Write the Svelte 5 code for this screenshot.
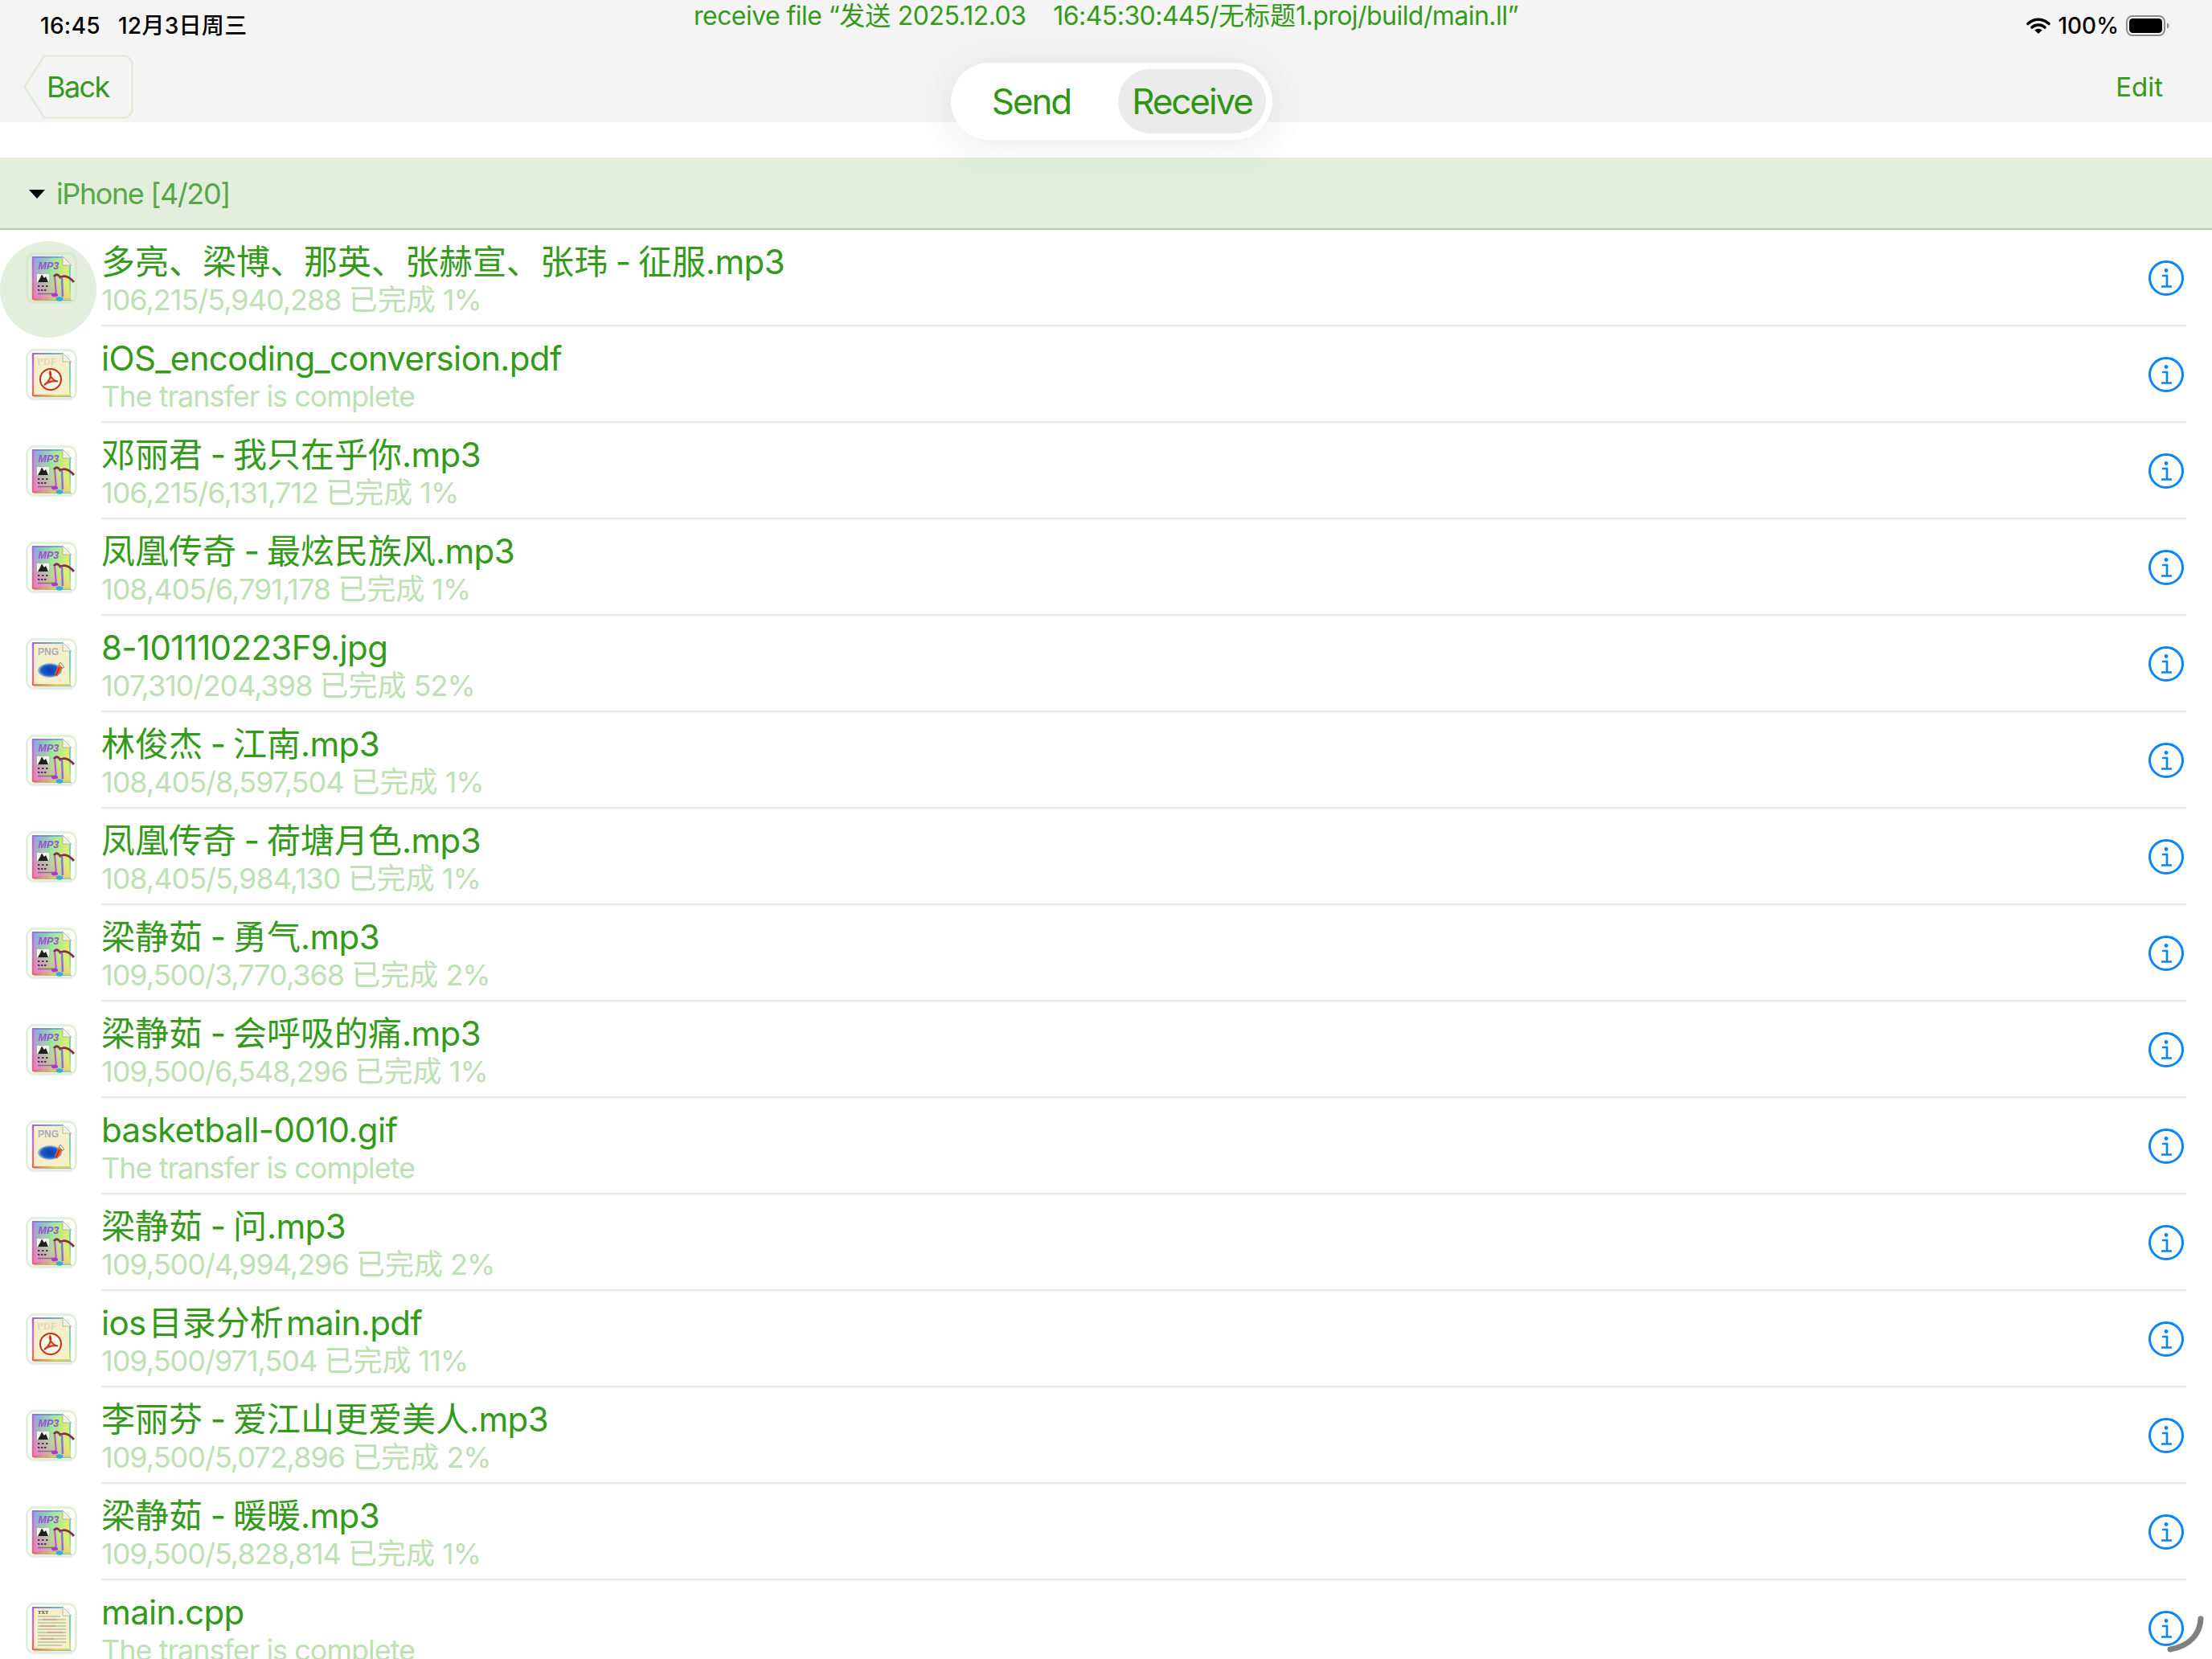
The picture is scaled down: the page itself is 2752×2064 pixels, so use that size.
<script>
  const files = [
    { name: '多亮、梁博、那英、张赫宣、张玮 - 征服.mp3', status: '106,215/5,940,288 已完成 1%', type: 'mp3', active: true },
    { name: 'iOS_encoding_conversion.pdf', status: 'The transfer is complete', type: 'pdf' },
    { name: '邓丽君 - 我只在乎你.mp3', status: '106,215/6,131,712 已完成 1%', type: 'mp3' },
    { name: '凤凰传奇 - 最炫民族风.mp3', status: '108,405/6,791,178 已完成 1%', type: 'mp3' },
    { name: '8-101110223F9.jpg', status: '107,310/204,398 已完成 52%', type: 'png' },
    { name: '林俊杰 - 江南.mp3', status: '108,405/8,597,504 已完成 1%', type: 'mp3' },
    { name: '凤凰传奇 - 荷塘月色.mp3', status: '108,405/5,984,130 已完成 1%', type: 'mp3' },
    { name: '梁静茹 - 勇气.mp3', status: '109,500/3,770,368 已完成 2%', type: 'mp3' },
    { name: '梁静茹 - 会呼吸的痛.mp3', status: '109,500/6,548,296 已完成 1%', type: 'mp3' },
    { name: 'basketball-0010.gif', status: 'The transfer is complete', type: 'png' },
    { name: '梁静茹 - 问.mp3', status: '109,500/4,994,296 已完成 2%', type: 'mp3' },
    { name: 'ios 目录分析 main.pdf', status: '109,500/971,504 已完成 11%', type: 'pdf', tight: true },
    { name: '李丽芬 - 爱江山更爱美人.mp3', status: '109,500/5,072,896 已完成 2%', type: 'mp3' },
    { name: '梁静茹 - 暖暖.mp3', status: '109,500/5,828,814 已完成 1%', type: 'mp3' },
    { name: 'main.cpp', status: 'The transfer is complete', type: 'txt' }
  ]

  // odd entries are the CJK runs, which keep their natural spacing
  const runs = (s) => s.split(/([\u3000-\u9fff]+)/)
</script>

{#snippet mixed(text)}
  {#each runs(text) as part, i}<span class:cjk={i % 2 === 1}>{part}</span>{/each}
{/snippet}

{#snippet page(fill)}
  <path d="M8 5H45L55 15V57H8Z" fill={fill} />
  <path d="M8 5H45" stroke="url(#edgeTop)" stroke-width="2" fill="none" />
  <path d="M8 4V58" stroke="url(#edgeLeft)" stroke-width="2.4" fill="none" />
  <path d="M54 15V57" stroke="url(#edgeRight)" stroke-width="2" fill="none" />
  <path d="M8 57H55" stroke="url(#edgeBottom)" stroke-width="2" fill="none" />
  <path d="M9 58.6H56" stroke="#77776c" stroke-width="1.2" opacity="0.55" fill="none" />
  <path d="M45 4L56 15H45Z" fill="#f6f4e4" stroke="#aaa792" stroke-width="0.8" />
{/snippet}

{#snippet fileIcon(type)}
  <svg class="doc" viewBox="0 0 62 62" width="62" height="62">
    {#if type === 'mp3'}
      {@render page('url(#mp3Base)')}
      <path d="M9 6H45L53 15V56H9Z" fill="url(#mp3Pink)" />
      <text x="14.5" y="20" class="lbl-mp3">MP3</text>
      <rect x="13" y="26" width="15" height="10" fill="#f4f4f0" />
      <path d="M14 36L17 31L19 26.5L22 31L24 29L27 36Z" fill="#1c201a" />
      <path d="M14 41h2.5M19 41h2.5M24 41h2.5M14 46h2.5M18 46h2.5M22 46h2.5" stroke="#4a4040" stroke-width="2" />
      <path d="M14 50.5H37" stroke="#7c7464" stroke-width="1.4" />
      <path d="M34 29C37 25 40 27 42 30C47 27 53 29 59 36" stroke="#8a2a50" stroke-width="2.8" fill="none" />
      <path d="M35 29L37 52" stroke="#b45cd0" stroke-width="2.2" fill="none" />
      <path d="M44 30L45 54" stroke="#7a70e0" stroke-width="2.4" fill="none" />
      <ellipse cx="35" cy="52" rx="4" ry="2.4" fill="#a040d8" />
      <ellipse cx="41" cy="57" rx="4.4" ry="2.8" fill="#30b0d8" />
    {:else if type === 'pdf'}
      {@render page('#f6efcb')}
      <text x="13" y="19" class="lbl-pdf">PDF</text>
      <circle cx="30" cy="37" r="13" fill="#fbf6ea" stroke="#bf3415" stroke-width="2" />
      <path d="M22 44C27 41 32 33 29.5 27.5C27.5 30 32 39 39 39.5C34 38.5 27 40 22 44Z" fill="none" stroke="#c8381a" stroke-width="2.2" />
    {:else if type === 'png'}
      {@render page('#f6efcb')}
      <text x="14" y="20" class="lbl-png">PNG</text>
      <ellipse cx="29" cy="39" rx="15" ry="9" fill="url(#blueBlob)" />
      <path d="M35 43L40 32L45 36L38 47Z" fill="#e8681e" />
      <path d="M36 44L40 35L42 36L37 46Z" fill="#d02a20" />
      <path d="M40 32L42 29L47 35L45 36Z" fill="#f8f4ee" stroke="#40302a" stroke-width="0.6" />
    {:else}
      {@render page('#f6efcb')}
      <text x="14" y="13" class="lbl-txt">TXT</text>
      <path d="M14 16H42M14 20H49M14 24H49M14 28H49M14 32H49M14 36H49M14 40H49M14 44H49M14 48H49M14 52H44" stroke="#b8c49c" stroke-width="1.3" />
      <path d="M20 20H38M16 28H36M26 36H46M18 44H34" stroke="#d0a0a0" stroke-width="1.3" />
    {/if}
  </svg>
{/snippet}

<svg class="defs" width="0" height="0" aria-hidden="true">
  <defs>
    <linearGradient id="edgeTop" gradientUnits="userSpaceOnUse" x1="8" y1="5" x2="45" y2="5">
      <stop offset="0" stop-color="#a868d8" /><stop offset="0.6" stop-color="#7a9ae0" /><stop offset="1" stop-color="#70c8e0" />
    </linearGradient>
    <linearGradient id="edgeLeft" gradientUnits="userSpaceOnUse" x1="8" y1="4" x2="8" y2="58">
      <stop offset="0" stop-color="#a868d8" /><stop offset="0.5" stop-color="#d070c8" /><stop offset="1" stop-color="#e86a50" />
    </linearGradient>
    <linearGradient id="edgeRight" gradientUnits="userSpaceOnUse" x1="54" y1="15" x2="54" y2="57">
      <stop offset="0" stop-color="#70c8d0" /><stop offset="0.6" stop-color="#80e098" /><stop offset="1" stop-color="#d8e070" />
    </linearGradient>
    <linearGradient id="edgeBottom" gradientUnits="userSpaceOnUse" x1="8" y1="57" x2="55" y2="57">
      <stop offset="0" stop-color="#e86a50" /><stop offset="0.6" stop-color="#e8d050" /><stop offset="1" stop-color="#b0e070" />
    </linearGradient>
    <linearGradient id="mp3Base" x1="0" y1="0" x2="1" y2="0.15">
      <stop offset="0" stop-color="#7ea0ea" /><stop offset="0.55" stop-color="#9ee89a" /><stop offset="1" stop-color="#e6ee6c" />
    </linearGradient>
    <linearGradient id="mp3Pink" x1="0" y1="1" x2="0.55" y2="0.35">
      <stop offset="0" stop-color="#f86ed0" stop-opacity="0.95" /><stop offset="1" stop-color="#f0b090" stop-opacity="0" />
    </linearGradient>
    <radialGradient id="blueBlob">
      <stop offset="0" stop-color="#0a3fb0" /><stop offset="0.7" stop-color="#1a5cc8" /><stop offset="1" stop-color="#5a90d8" stop-opacity="0.5" />
    </radialGradient>
  </defs>
</svg>

<div class="screen">
  <header class="top">
    <div class="status">
      <div class="clock"><span>16:45</span><span>12月3日周三</span></div>
      <div class="receive-msg">{@render mixed('receive file “发送 2025.12.03    16:45:30:445/无标题1.proj/build/main.ll”')}</div>
      <div class="sys">
        <svg width="30" height="20" viewBox="0 0 30 20">
          <path d="M2 7.5C9.5 0.5 20.5 0.5 28 7.5M7 12C11.5 8 18.5 8 23 12" fill="none" stroke="#000" stroke-width="3.6" stroke-linecap="round" />
          <path d="M15 20L10.3 15.4C13 13.2 17 13.2 19.7 15.4Z" fill="#000" />
        </svg>
        <span>100%</span>
        <svg width="54" height="26" viewBox="0 0 54 26">
          <rect x="1" y="1" width="47" height="24" rx="7" fill="none" stroke="#8e8e8e" stroke-width="2" />
          <rect x="4" y="4" width="41" height="18" rx="4.5" fill="#000" />
          <path d="M51 9.5C53 10.5 53.6 11.5 53.6 13C53.6 14.5 53 15.5 51 16.5Z" fill="#8e8e8e" />
        </svg>
      </div>
    </div>
    <nav class="navbar">
      <button class="back">
        <svg class="back-shape" width="137" height="80" viewBox="0 0 137 80">
          <path d="M26 1.5H124C131 1.5 135.5 6 135.5 13V67C135.5 74 131 78.5 124 78.5H26L1.5 40Z" fill="none" stroke="#deecd8" stroke-width="2.4" />
        </svg>
        <span>Back</span>
      </button>
      <button class="edit">Edit</button>
    </nav>
  </header>

  <div class="segmented">
    <span class="seg">Send</span>
    <span class="seg selected">Receive</span>
  </div>

  <section class="list">
    <div class="section-head">
      <i class="caret"></i>
      <span>iPhone [4/20]</span>
    </div>

    {#each files as f}
      <div class="row">
        <div class="icon-cell">
          {#if f.active}<div class="ripple"></div>{/if}
          <div class="tile" class:clear={f.active}>
            {@render fileIcon(f.type)}
          </div>
        </div>
        <div class="row-body">
          <div class="texts">
            <div class="name" class:tight={f.tight}>{@render mixed(f.name)}</div>
            <div class="progress">{@render mixed(f.status)}</div>
          </div>
          <svg class="info" width="46" height="46" viewBox="0 0 46 46">
            <circle cx="23" cy="23" r="20.5" fill="none" stroke="#0a84ff" stroke-width="3" />
            <circle cx="23" cy="13.5" r="2.4" fill="#0a84ff" />
            <path d="M18 20H24V33M17 33.5H30" fill="none" stroke="#0a84ff" stroke-width="2.6" />
          </svg>
        </div>
      </div>
    {/each}
  </section>

  <svg class="scroll-arc" width="50" height="50" viewBox="0 0 50 50">
    <path d="M42 4C41 23 28 38 4 42" fill="none" stroke="#808080" stroke-width="7" stroke-linecap="round" />
  </svg>
</div>

<style>
  :global(body) {
    margin: 0;
    background: #fff;
  }

  .defs {
    position: absolute;
  }

  .screen {
    position: relative;
    width: 2752px;
    height: 2064px;
    overflow: hidden;
    background: #fff;
    font-family: Inter, "Noto Sans CJK SC", sans-serif;
  }

  .cjk {
    letter-spacing: 0;
  }

  .top {
    height: 152px;
    background: #f4f4f4;
    display: flex;
    flex-direction: column;
  }

  .status {
    height: 56px;
    padding: 0 50px;
    display: flex;
    justify-content: space-between;
    color: #000;
    font-size: 28px;
    position: relative;
  }

  .clock {
    display: flex;
    gap: 22px;
    padding-top: 14px;
    line-height: 36px;
    font-weight: 500;
    letter-spacing: 0.3px;
  }

  .receive-msg {
    position: absolute;
    left: 0;
    right: 0;
    top: 0;
    text-align: center;
    font-size: 32px;
    line-height: 40px;
    color: #339a1a;
    white-space: pre;
    letter-spacing: -0.55px;
  }

  .sys {
    display: flex;
    align-items: flex-start;
    gap: 9px;
    padding-top: 14px;
    margin-right: 3px;
    line-height: 36px;
    font-weight: 500;
  }

  .sys svg:first-child {
    margin-top: 8px;
  }

  .sys svg:last-child {
    margin-top: 5px;
  }

  .navbar {
    display: flex;
    justify-content: space-between;
    align-items: flex-start;
    padding: 12px 61px 0 29px;
  }

  .navbar button {
    border: 0;
    background: none;
    padding: 0;
    font-family: inherit;
    color: #339a1a;
  }

  .back {
    position: relative;
    width: 137px;
    height: 80px;
    font-size: 36px;
    letter-spacing: -1.6px;
    text-align: left;
  }

  .back span {
    position: relative;
    padding-left: 29px;
  }

  .back-shape {
    position: absolute;
    left: 0;
    top: 0;
  }

  .edit {
    height: 80px;
    font-size: 33px;
  }

  .segmented {
    position: absolute;
    left: 1183px;
    top: 78px;
    width: 400px;
    height: 96px;
    box-sizing: border-box;
    padding: 8px;
    border-radius: 48px;
    background: rgba(255, 255, 255, 0.92);
    box-shadow: 0 6px 50px rgba(0, 0, 0, 0.09);
    display: flex;
    justify-content: space-between;
    font-size: 44px;
    letter-spacing: -2.1px;
    color: #2f9512;
    z-index: 2;
  }

  .seg {
    display: flex;
    align-items: center;
    justify-content: center;
    width: 184px;
    height: 80px;
    border-radius: 40px;
  }

  .seg.selected {
    background: #ebebeb;
  }

  .section-head {
    margin-top: 44px;
    height: 86px;
    background: #e3eedd;
    border-bottom: 2px solid #a8d49c;
    padding-left: 36px;
    padding-top: 2px;
    display: flex;
    align-items: center;
    gap: 14px;
    font-size: 36px;
    letter-spacing: -1.4px;
    color: #55a845;
  }

  .caret {
    width: 0;
    height: 0;
    border-left: 10px solid transparent;
    border-right: 10px solid transparent;
    border-top: 11px solid #000;
  }

  .row {
    display: flex;
    height: 120px;
  }

  .icon-cell {
    position: relative;
    width: 126px;
    flex: none;
  }

  .ripple {
    position: absolute;
    left: 0;
    top: 14px;
    width: 120px;
    height: 120px;
    border-radius: 50%;
    background: #e3eedd;
  }

  .tile {
    position: absolute;
    left: 32px;
    top: 28px;
    width: 64px;
    height: 64px;
    box-sizing: border-box;
    border: 3px solid #e4f0de;
    border-radius: 11px;
    background: #fff;
  }

  .tile.clear {
    background: transparent;
    border-color: #d6e8cd;
  }

  .doc {
    display: block;
    margin: -2px;
    overflow: visible;
  }

  .lbl-mp3 {
    font: italic 700 12.5px "Liberation Sans", sans-serif;
    fill: #9a4fd0;
  }

  .lbl-pdf {
    font: 700 12.5px "Liberation Serif", serif;
    fill: #ddd6b8;
  }

  .lbl-png {
    font: 700 12px "Liberation Sans", sans-serif;
    fill: #a9adb6;
  }

  .lbl-txt {
    font: 700 6.5px "Liberation Serif", serif;
    fill: #3a3a30;
  }

  .row-body {
    flex: 1;
    margin-right: 32px;
    padding-right: 2px;
    border-bottom: 2px solid #e3eedd;
    display: flex;
    align-items: center;
    justify-content: space-between;
  }

  .texts {
    align-self: flex-start;
    padding-top: 16px;
  }

  .name {
    font-size: 42px;
    line-height: 48px;
    letter-spacing: -0.65px;
    word-spacing: -1.5px;
    color: #339a1a;
  }

  .name.tight {
    word-spacing: -8px;
  }

  .progress {
    font-size: 36px;
    line-height: 42px;
    margin-top: 2px;
    letter-spacing: -1px;
    color: #bde0b4;
  }

  .info {
    flex: none;
    margin-top: 2px;
  }

  .scroll-arc {
    position: absolute;
    left: 2696px;
    top: 2010px;
  }
</style>
